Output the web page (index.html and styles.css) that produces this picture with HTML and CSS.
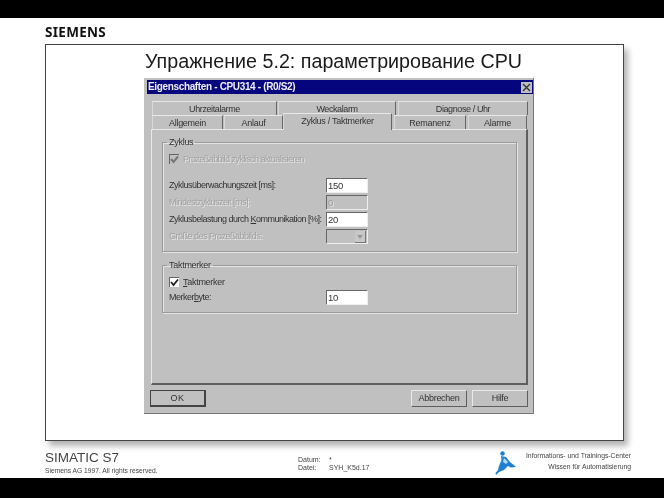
FILE: index.html
```html
<!DOCTYPE html>
<html lang="ru">
<head>
  <meta charset="UTF-8">
  <meta name="viewport" content="width=device-width, initial-scale=1.0">
  <title>Упражнение 5.2</title>
  <link rel="stylesheet" href="styles.css">
</head>
<body>
  <div class="black-bar top"></div>
  <div class="brand">SIEMENS</div>

  <section class="slide">
    <h1>Упражнение 5.2: параметрирование CPU</h1>

    <div class="dialog">
      <div class="titlebar">
        <span>Eigenschaften - CPU314 - (R0/S2)</span>
        <span class="close-btn">
          <svg width="9" height="9" viewBox="0 0 9 9"><path d="M1 1L8 8M8 1L1 8" stroke="#333" stroke-width="1.4"/></svg>
        </span>
      </div>

      <div class="tabs back">
        <div class="tab w-uhr">Uhrzeitalarme</div>
        <div class="tab w-weck">Weckalarm</div>
        <div class="tab w-diag">Diagnose / Uhr</div>
      </div>
      <div class="tabs front">
        <div class="tab w-allg">Allgemein</div>
        <div class="tab w-anl">Anlauf</div>
        <div class="tab active">Zyklus / Taktmerker</div>
        <div class="tab w-rem">Remanenz</div>
        <div class="tab w-ala">Alarme</div>
      </div>

      <div class="panel">
        <fieldset class="group zyklus">
          <legend>Zyklus</legend>
          <div class="check-row disabled">
            <span class="check off"><svg width="9" height="9" viewBox="0 0 9 9"><path d="M1 4L3.5 7L8 1.5" fill="none" stroke="#777" stroke-width="2"/></svg></span>
            <span>Prozeßabbild zyklisch aktualisieren</span>
          </div>
          <div class="field-row first">
            <label>Zyklusüberwachungszeit [ms]:</label>
            <div class="input">150</div>
          </div>
          <div class="field-row disabled">
            <label>Mindestzykluszeit [ms]:</label>
            <div class="input off">0</div>
          </div>
          <div class="field-row">
            <label>Zyklusbelastung durch <u>K</u>ommunikation [%]:</label>
            <div class="input">20</div>
          </div>
          <div class="field-row disabled">
            <label>Größe des Prozeßabbilds:</label>
            <div class="input off combo"><span class="arrow"></span></div>
          </div>
        </fieldset>

        <fieldset class="group takt">
          <legend>Taktmerker</legend>
          <div class="check-row">
            <span class="check"><svg width="9" height="9" viewBox="0 0 9 9"><path d="M1 4L3.5 7L8 1.5" fill="none" stroke="#222" stroke-width="1.8"/></svg></span>
            <span><u>T</u>aktmerker</span>
          </div>
          <div class="field-row">
            <label>Merker<u>b</u>yte:</label>
            <div class="input">10</div>
          </div>
        </fieldset>
      </div>

      <div class="buttons">
        <div class="btn default">OK</div>
        <div class="spacer"></div>
        <div class="btn">Abbrechen</div>
        <div class="btn">Hilfe</div>
      </div>
    </div>
  </section>

  <footer class="footer">
    <div class="product">
      <div class="simatic">SIMATIC S7</div>
      <div class="rights">Siemens AG 1997. All rights reserved.</div>
    </div>
    <div class="meta">
      <span>Datum:</span><span>*</span>
      <span>Datei:</span><span>SYH_K5d.17</span>
    </div>
    <svg class="runner" width="22" height="25" viewBox="0 0 22 25">
      <circle cx="7.5" cy="2.5" r="2.3" fill="#1f7fd0"/>
      <path d="M6 5L11 6L15 11L20 15L21 16L16 16.5L13 15L9 19L4 21L1 24L0.5 22L3 19L4 15L6.5 9Z" fill="#1f7fd0"/>
      <path d="M9 7L13 11L11 13L8 11Z" fill="#bcd9f2"/>
    </svg>
    <div class="center-info">
      <div>Informations- und Trainings-Center</div>
      <div>Wissen für Automatisierung</div>
    </div>
  </footer>
  <div class="black-bar bottom"></div>
</body>
</html>
```

FILE: styles.css
```css
html, body {
  margin: 0;
  padding: 0;
}
body {
  width: 664px;
  height: 498px;
  overflow: hidden;
  background: #fff;
  color: #222;
  font-family: "Liberation Sans", Arial, sans-serif;
  display: flex;
  flex-direction: column;
}
.black-bar {
  background: #000;
  flex: none;
}
.black-bar.top {
  height: 18px;
}
.black-bar.bottom {
  height: 20px;
}
.brand {
  height: 26px;
  padding-left: 45px;
  font-family: "Noto Sans", sans-serif;
  font-size: 13.5px;
  font-weight: 700;
  line-height: 28px;
  letter-spacing: 0.3px;
  color: #111;
  filter: blur(0.3px);
}

/* slide frame */
.slide {
  box-sizing: border-box;
  width: 579px;
  height: 397px;
  margin-left: 45px;
  padding: 5px 0 0 98px;
  border: 1px solid #444;
  box-shadow: 4px 5px 6px rgba(0,0,0,0.3);
  background: #fff;
}
.slide h1 {
  margin: 0 0 6px 1px;
  font-size: 19.7px;
  font-weight: 400;
  line-height: 22px;
  color: #1a1a1a;
  white-space: nowrap;
  filter: blur(0.3px);
}

/* dialog */
.dialog {
  box-sizing: border-box;
  width: 390px;
  height: 336px;
  padding: 2px 5px 0 7px;
  background: #c0c0c0;
  border-right: 1px solid #777;
  border-bottom: 1px solid #777;
  font-size: 9px;
  letter-spacing: -0.28px;
  color: #333;
  filter: blur(0.45px);
}
.titlebar {
  height: 14px;
  margin: 0 -5px 0 -4px;
  padding: 0 1px;
  background: #05057e;
  color: #f0f0f6;
  font-size: 10px;
  font-weight: 700;
  letter-spacing: -0.35px;
  line-height: 14px;
  display: flex;
  justify-content: space-between;
  align-items: center;
}
.close-btn {
  width: 11px;
  height: 11px;
  background: #c0c0c0;
  display: flex;
  align-items: center;
  justify-content: center;
}

/* tabs */
.tabs {
  display: flex;
  margin-left: 1px;
}
.tabs.back {
  margin-top: 7px;
  height: 14px;
  letter-spacing: -0.4px;
}
.tabs.front {
  height: 14px;
  position: relative;
}
.tab {
  box-sizing: border-box;
  height: 100%;
  text-align: center;
  line-height: 15px;
  border-top: 1px solid #e8e8e8;
  border-left: 1px solid #d8d8d8;
  border-right: 1px solid #666;
}
.w-uhr { width: 125px; margin-right: 1px; }
.w-weck { width: 118px; margin-right: 2px; }
.w-diag { width: 130px; }
.w-allg { width: 71px; margin-right: 1px; }
.w-anl { width: 59px; }
.w-rem { width: 72px; margin-right: 2px; }
.w-ala { width: 59px; }
.tab.active {
  width: 109px;
  height: 17px;
  margin: -2px 2px 0 0;
  background: #c0c0c0;
  border-bottom: none;
  position: relative;
  z-index: 1;
}

/* panel */
.panel {
  box-sizing: border-box;
  height: 256px;
  padding: 6px 9px 0 10px;
  border-top: 1px solid #e8e8e8;
  border-left: 1px solid #e8e8e8;
  border-right: 2px solid #5e5e5e;
  border-bottom: 2px solid #5e5e5e;
}
.group {
  margin: 0;
  padding: 0 0 0 6px;
  border: 1px solid #9a9a9a;
  box-shadow: 1px 1px 0 #e4e4e4, inset 1px 1px 0 #e4e4e4;
  min-width: 0;
}
.group legend {
  padding: 0 2px;
  margin-left: -2px;
  font-size: 9px;
  line-height: 12px;
}
.group.zyklus {
  height: 114px;
}
.group.takt {
  height: 52px;
  margin-top: 7px;
}
.check-row {
  display: flex;
  align-items: center;
  gap: 4px;
  height: 12px;
}
.zyklus .check-row {
  margin-top: 5px;
  letter-spacing: -0.55px;
}
.takt .check-row {
  margin-top: 5px;
}
.check {
  box-sizing: border-box;
  width: 10px;
  height: 10px;
  background: #fff;
  border-top: 1px solid #666;
  border-left: 1px solid #666;
  display: flex;
  align-items: center;
  justify-content: center;
}
.check.off {
  background: #c0c0c0;
}
.field-row {
  display: flex;
  align-items: center;
  height: 14px;
  margin-top: 3px;
}
.field-row.first {
  margin-top: 13px;
}
.takt .field-row {
  margin-top: 2px;
}
.field-row label {
  width: 157px;
  flex: none;
  white-space: nowrap;
  letter-spacing: -0.5px;
}
.disabled {
  color: #a2a2a2;
  text-shadow: 1px 1px 0 #e6e6e6;
}
.input {
  box-sizing: border-box;
  width: 41px;
  height: 14px;
  padding-left: 1px;
  background: #fff;
  border-top: 1px solid #666;
  border-left: 1px solid #666;
  box-shadow: 1px 1px 0 #eee;
  font-size: 9.5px;
  line-height: 13px;
  color: #333;
}
.input.off {
  background: #c0c0c0;
  color: #999;
}
.input.combo {
  display: flex;
  justify-content: flex-end;
  padding: 1px;
}
.arrow {
  width: 10px;
  height: 11px;
  background: #c8c8c8;
  border-right: 1px solid #777;
  border-bottom: 1px solid #777;
  position: relative;
}
.arrow::after {
  content: "";
  position: absolute;
  left: 2px;
  top: 4px;
  border-left: 3px solid transparent;
  border-right: 3px solid transparent;
  border-top: 4px solid #999;
}

/* buttons */
.buttons {
  display: flex;
  gap: 5px;
  margin: 5px 0 0 -1px;
}
.spacer {
  flex: 1;
}
.btn {
  box-sizing: border-box;
  width: 56px;
  height: 17px;
  text-align: center;
  line-height: 15px;
  border-top: 1px solid #e8e8e8;
  border-left: 1px solid #e8e8e8;
  border-right: 1px solid #5e5e5e;
  border-bottom: 1px solid #5e5e5e;
}
.btn.default {
  border: 1px solid #444;
  border-right-width: 2px;
  border-bottom-width: 2px;
  letter-spacing: 0.6px;
}

/* footer */
.footer {
  flex: 1;
  display: flex;
  padding-left: 45px;
  color: #444;
  filter: blur(0.35px);
}
.product {
  width: 253px;
  padding-top: 9px;
}
.simatic {
  font-size: 13.5px;
  line-height: 16px;
}
.rights {
  font-size: 6.7px;
  line-height: 10px;
}
.meta {
  width: 197px;
  padding-top: 15px;
  display: grid;
  grid-template-columns: 31px 1fr;
  grid-auto-rows: 8px;
  font-size: 7px;
  line-height: 8px;
  align-content: start;
}
.runner {
  margin-top: 10px;
  flex: none;
}
.center-info {
  width: 115px;
  margin-left: -1px;
  padding-top: 9px;
  font-size: 6.8px;
  line-height: 11px;
  text-align: right;
  white-space: nowrap;
}
```
